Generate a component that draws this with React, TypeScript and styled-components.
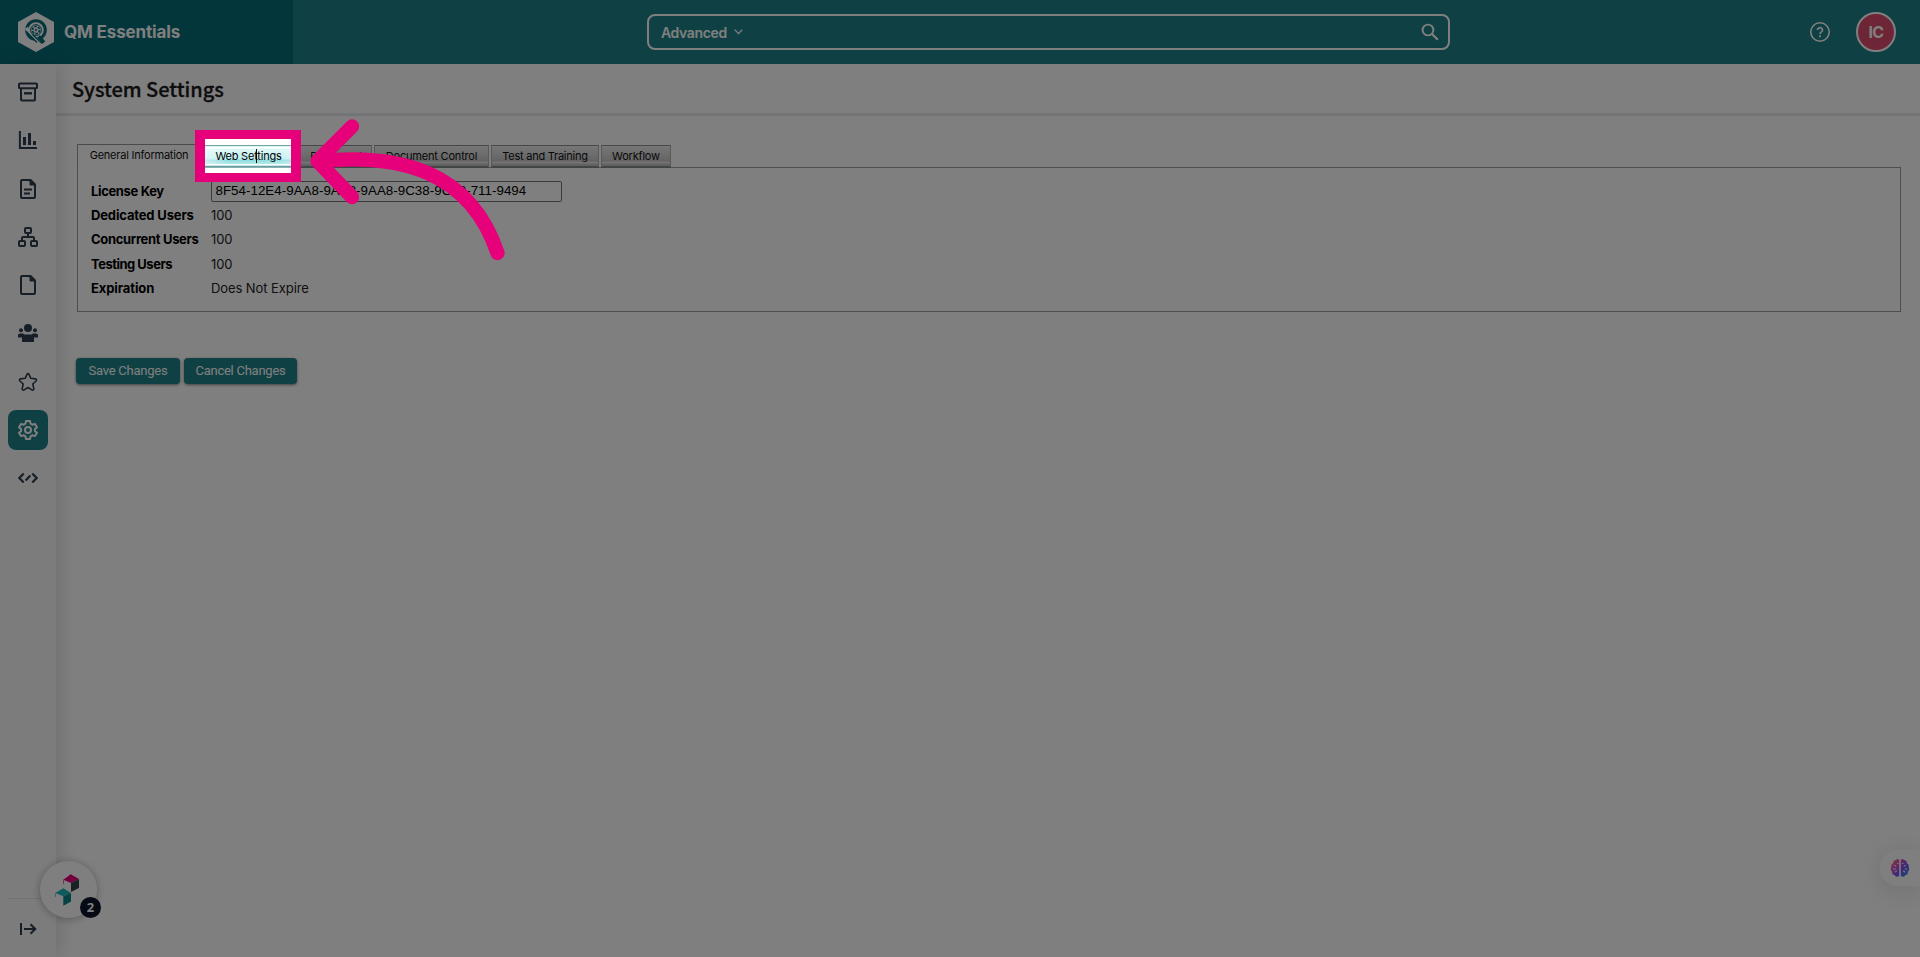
import React from "react";
import styled, { createGlobalStyle, css } from "styled-components";

const Global = createGlobalStyle`
  * { box-sizing: border-box; }
  html, body { margin: 0; height: 100%; overflow: hidden; }
  body { font-family: Inter, "Liberation Sans", sans-serif; background: #fff; color: #111; }
`;

const Page = styled.div`
  position: relative;
  display: flex;
  flex-direction: column;
  width: 100%;
  height: 957px;
  overflow: hidden;
`;

const Header = styled.header`
  display: flex;
  height: 64px;
  flex: none;
  background: #1e8289;
  color: #fff;
`;

const Brand = styled.div`
  display: flex;
  align-items: center;
  width: 293px;
  flex: none;
  padding-left: 18px;
  background: #066c77;
`;

const BrandName = styled.span`
  margin-left: 10px;
  font-size: 17px;
  font-weight: 700;
  letter-spacing: -0.15px;
`;

const SearchBox = styled.div`
  display: flex;
  align-items: center;
  width: 803px;
  height: 36px;
  margin: 14px 0 0 354px;
  padding: 0 9px 0 12px;
  border: 2px solid #fff;
  border-radius: 8px;
`;

const SearchMode = styled.span`
  font-size: 14px;
  font-weight: 600;
  letter-spacing: -0.36px;
`;

const Chevron = styled.svg`
  margin-left: 7px;
`;

const SearchIcon = styled.svg`
  margin-left: auto;
`;

const HeaderActions = styled.div`
  display: flex;
  align-items: center;
  margin-left: auto;
  gap: 26px;
  padding-right: 24px;
`;

const Avatar = styled.div`
  display: flex;
  align-items: center;
  justify-content: center;
  width: 40px;
  height: 40px;
  border: 2px solid #fff;
  border-radius: 50%;
  background: #dd4a6c;
  font-size: 16px;
  font-weight: 700;
  letter-spacing: -0.6px;
`;

const Body = styled.div`
  display: flex;
  flex: 1;
  min-height: 0;
`;

const Sidebar = styled.nav`
  position: relative;
  display: flex;
  flex-direction: column;
  align-items: center;
  width: 56px;
  flex: none;
  padding-top: 8px;
  gap: 8.25px;
  background: #f8f9f9;
  box-shadow: 4px 0 18px rgba(0, 0, 0, 0.13);
`;

const NavItem = styled.div<{ $active?: boolean }>`
  display: flex;
  align-items: center;
  justify-content: center;
  width: 40px;
  height: 40px;
  flex: none;
  border-radius: 8px;
  color: ${(p) => (p.$active ? "#fff" : "#2c3d4f")};
  background: ${(p) => (p.$active ? "#1e8289" : "transparent")};
`;

const SidebarFoot = styled.div`
  display: flex;
  justify-content: center;
  width: 40px;
  height: 59px;
  margin-top: auto;
  padding-top: 23px;
  border-top: 1px solid #dfe2e5;
  color: #2c3d4f;
`;

const Main = styled.main`
  flex: 1;
  min-width: 0;
`;

const TitleBar = styled.div`
  height: 52px;
  padding: 6px 0 0 16px;
  border-bottom: 3px solid #e5e9ed;
`;

const Title = styled.h1`
  margin: 0;
  font: 500 20px/38px "Noto Sans CJK SC", "Noto Sans", sans-serif;
  -webkit-text-stroke: 0.3px #1b1b1b;
  letter-spacing: -0.05px;
  color: #1b1b1b;
`;

const Content = styled.div`
  padding: 28px 19px 0 21px;
`;

const TabRow = styled.div`
  display: flex;
  align-items: flex-end;
  height: 24px;
  margin-bottom: -1px;
  position: relative;
`;

const Tab = styled.div<{ $w: number; $kind: "open" | "lit" | "plain"; $ls?: number }>`
  display: flex;
  align-items: center;
  justify-content: center;
  width: ${(p) => p.$w}px;
  height: 23px;
  font-size: 11px;
  letter-spacing: ${(p) => p.$ls ?? -0.2}px;
  white-space: nowrap;
  color: #111;
  ${(p) =>
    p.$kind === "open" &&
    css`
      height: 24px;
      padding: 0 0 3px 2px;
      border: 1px solid #969696;
      border-bottom: 0;
      background: #fff;
    `}
  ${(p) =>
    p.$kind === "lit" &&
    css`
      padding-bottom: 1px;
      color: #000;
      background:
        linear-gradient(90deg, rgba(255, 255, 255, 0.6), transparent 30% 75%, rgba(255, 255, 255, 0.35)) 0 3px / 100% 16px no-repeat,
        linear-gradient(#72a5a8 0 1px, #d8f3f3 1px 2px, #fff 2px 3px, #def7f7 4px, #bdeff0 14px, #8fdcde 15px, #b0e9ea 19px, #fff 19px 20px, #c8e6e7 20px 21px, #6d9da1 21px 22px, #84b3b6 22px);
    `}
  ${(p) =>
    p.$kind === "plain" &&
    css`
      margin-left: 2px;
      border: 1px solid #b2b2b2;
      border-top-color: #8e8e8e;
      border-bottom: 2px solid #858b8b;
      background: linear-gradient(#ededed, #dedede 35%, #c6c6c6 75%, #e6e6e6 80% 86%, #c4c4c4 90%);
    `}
`;

const Panel = styled.section`
  height: 145px;
  padding: 11px 0 0 13px;
  border: 1px solid #9b9e9e;
`;

const Field = styled.div`
  display: grid;
  grid-template-columns: 120px auto;
  align-items: center;
  height: 24.2px;
  font-size: 13px;
`;

const Label = styled.span<{ $ls: number }>`
  font-weight: 700;
  letter-spacing: ${(p) => p.$ls}px;
  color: #000;
`;

const Value = styled.span`
  color: #222;
  letter-spacing: -0.08px;
`;

const KeyBox = styled.div`
  width: 351px;
  height: 21px;
  padding-left: 3.500px;
  border: 1px solid #767676;
  border-radius: 2px;
  font: 13.333px/18px "Liberation Sans", Arial, sans-serif;
  letter-spacing: 0.03px;
  color: #000;
`;

const Actions = styled.div`
  display: flex;
  gap: 4px;
  margin: 46px 0 0 -1px;
`;

const Button = styled.button<{ $w: number }>`
  width: ${(p) => p.$w}px;
  height: 26px;
  padding: 0;
  border: 0;
  border-radius: 4px;
  background: #1e8289;
  color: #fff;
  font: 13px/26px Roboto, "Liberation Sans", sans-serif;
  letter-spacing: -0.25px;
  box-shadow: 0 1px 3px rgba(0, 0, 0, 0.5);
`;

const CubeWidget = styled.div`
  position: absolute;
  left: 40px;
  top: 861px;
  display: flex;
  align-items: center;
  justify-content: center;
  width: 57px;
  height: 57px;
  padding-right: 2px;
  border-radius: 50%;
  background: #fff;
  box-shadow: 0 1px 8px rgba(0, 0, 0, 0.3);
`;

const CountBadge = styled.span`
  position: absolute;
  left: 40px;
  top: 36px;
  width: 21px;
  height: 21px;
  border-radius: 50%;
  background: #0d1428;
  color: #fff;
  font: 700 13px/21px "Noto Sans", sans-serif;
  text-align: center;
`;

const BrainWidget = styled.div`
  position: absolute;
  right: 0;
  top: 850px;
  display: flex;
  align-items: center;
  width: 40px;
  height: 36px;
  padding-left: 10px;
  border-radius: 18px 0 0 18px;
  background: #fff;
  box-shadow: 0 4px 28px rgba(0, 0, 0, 0.13);
`;

const Spotlight = styled.div`
  position: absolute;
  left: 205px;
  top: 139px;
  width: 86px;
  height: 34px;
  box-shadow: 0 0 0 2400px rgba(0, 0, 0, 0.5);
`;

const Frame = styled.div`
  position: absolute;
  left: 195px;
  top: 130px;
  width: 105.5px;
  height: 52px;
  border: 10px solid #e6007a;
  border-width: 9px 10px;
`;

const Caret = styled.div`
  position: absolute;
  left: 256px;
  top: 149px;
  width: 1px;
  height: 14px;
  background: #000;
`;

const Arrow = styled.svg`
  position: absolute;
  left: 300px;
  top: 110px;
`;

const Logo = () => (
  <svg width="36" height="40" viewBox="0 0 36 40">
    <path d="M18 0 36 10V30L18 40 0 30V10Z" fill="#fff" />
    <g fill="none" stroke="#066c77">
      <circle cx="18" cy="18" r="9.3" strokeWidth="3" />
      <path d="M8 16 22 31" stroke="#fff" strokeWidth="3.4" />
      <path d="M8.3 19.5 19 30.5M14.5 22.5l9.5 9" strokeWidth="1.3" />
      <path d="M20.5 24.5 26 30.5" strokeWidth="3.4" />
      <circle cx="18" cy="18" r="5.4" strokeWidth="1" />
      <circle cx="18" cy="18" r="3.6" strokeWidth="1.8" strokeDasharray="2.6 1.1" />
      <circle cx="18" cy="18" r="0.9" strokeWidth="1" />
    </g>
  </svg>
);

const Icon = ({ children }: { children: React.ReactNode }) => (
  <svg width="20" height="20" viewBox="0 0 20 20" fill="none" stroke="currentColor" strokeWidth="2" strokeLinejoin="round">
    {children}
  </svg>
);

const navIcons: React.ReactNode[] = [
  <>
    <rect x="1" y="1.5" width="18" height="4.7" rx="0.8" />
    <path d="M3 6.5v11a.9.9 0 0 0 .9.9h12.2a.9.9 0 0 0 .9-.9v-11" />
    <path d="M6 11.3h8" strokeWidth="2.4" />
  </>,
  <>
    <path d="M1.9 1v17.1H19" strokeLinejoin="miter" />
    <path d="M6.5 7v8M11.5 3v12M16.5 11v4" strokeWidth="3" />
  </>,
  <>
    <path d="M12.5 1H4A1 1 0 0 0 3 2v16a1 1 0 0 0 1 1h12a1 1 0 0 0 1-1V5.5Z" />
    <path d="M12 1v5h5Z" fill="currentColor" strokeWidth="1" />
    <path d="M6 10.5h8M6 14.5h6" />
  </>,
  <>
    <rect x="7" y="1" width="6" height="5" rx="1" />
    <rect x="1" y="14" width="6" height="5" rx="1" />
    <rect x="13" y="14" width="6" height="5" rx="1" />
    <path d="M10 6v4M4 14v-3a1 1 0 0 1 1-1h10a1 1 0 0 1 1 1v3" />
  </>,
  <>
    <path d="M12.5 1H4A1 1 0 0 0 3 2v16a1 1 0 0 0 1 1h12a1 1 0 0 0 1-1V5.5Z" />
    <path d="M12 1v5h5Z" fill="currentColor" strokeWidth="1" />
  </>,
  <g fill="currentColor" stroke="none">
    <circle cx="10" cy="5" r="4" />
    <circle cx="3" cy="7.2" r="2" />
    <circle cx="17" cy="7.2" r="2" />
    <path d="M0 14.5v-2a2 2 0 0 1 2-2h3.2l1 1h7.6l1-1H18a2 2 0 0 1 2 2v2h-4V19H4v-4.5Z" />
  </g>,
  <path
    d="M10 1.6c.5 0 .8.3 1 .7l1.8 4 4.6.6c1.1.2 1.5 1.3.7 2.1l-3.3 3 1 4.6c.2 1.1-.9 1.9-1.9 1.3L10 15.5l-3.9 2.4c-1 .6-2.1-.2-1.900-1.300l1-4.600-3.300-3c-.8-.8-.4-1.900.7-2.100l4.600-.6 1.800-4c.2-.4.5-.7 1-.7Z"
    strokeWidth="1.6"
  />,
  <>
    <path d="M8 1h4l.6 2.7 1.7 1 2.7-.8 2 3.3-2.1 1.9v1.800l2.100 1.900-2 3.300-2.700-.8-1.700 1L12 19H8l-.6-2.700-1.700-1-2.700.8-2-3.300 2.100-1.900V9.100L1 7.200l2-3.300 2.700.8 1.700-1Z" />
    <circle cx="10" cy="10" r="3" />
  </>,
  <path d="M5.7 5.5 1.3 10l4.4 4.5M14.3 5.5l4.4 4.5-4.4 4.5M12.3 7.6 7.7 12.4" strokeWidth="2.2" strokeLinejoin="miter" />,
];

const fields: [string, number, string][] = [
  ["Dedicated Users", -0.15, "100"],
  ["Concurrent Users", -0.32, "100"],
  ["Testing Users", -0.5, "100"],
  ["Expiration", -0.1, "Does Not Expire"],
];

export default function App() {
  return (
    <Page>
      <Global />
      <Header>
        <Brand>
          <Logo />
          <BrandName>QM Essentials</BrandName>
        </Brand>
        <SearchBox>
          <SearchMode>Advanced</SearchMode>
          <Chevron width="9" height="6" viewBox="0 0 9 6" fill="none" stroke="#fff" strokeWidth="1.3">
            <path d="M.8.8 4.5 4.6 8.2.8" />
          </Chevron>
          <SearchIcon width="18" height="18" viewBox="0 0 18 18" fill="none" stroke="#fff" strokeWidth="1.9">
            <circle cx="7" cy="7" r="5.4" />
            <path d="m10.8 10.8 6 6" strokeWidth="2.2" />
          </SearchIcon>
        </SearchBox>
        <HeaderActions>
          <svg width="20" height="20" viewBox="0 0 20 20" fill="none" stroke="#fff" strokeWidth="1.6">
            <circle cx="10" cy="10" r="9.2" />
            <path d="M7.5 8a2.5 2.3 0 1 1 3.9 1.9c-.9.6-1.4 1-1.4 2.1M10 13.3v1.9" strokeWidth="1.7" />
          </svg>
          <Avatar>IC</Avatar>
        </HeaderActions>
      </Header>
      <Body>
        <Sidebar>
          {navIcons.map((icon, i) => (
            <NavItem key={i} $active={i === 7}>
              <Icon>{icon}</Icon>
            </NavItem>
          ))}
          <SidebarFoot>
            <svg width="17" height="14" viewBox="0 0 17 14" fill="none" stroke="currentColor" strokeWidth="2">
              <path d="M1 1v12M4 7h11M10.5 2.2 15.3 7l-4.8 4.8" />
            </svg>
          </SidebarFoot>
        </Sidebar>
        <Main>
          <TitleBar>
            <Title>System Settings</Title>
          </TitleBar>
          <Content>
            <TabRow>
              <Tab $w={122} $kind="open" $ls={-0.22}>General Information</Tab>
              <Tab $w={99} $kind="lit">Web Settings</Tab>
              <Tab $w={72} $kind="plain" $ls={0.1}>Password</Tab>
              <Tab $w={115} $kind="plain">Document Control</Tab>
              <Tab $w={108} $kind="plain" $ls={-0.25}>Test and Training</Tab>
              <Tab $w={70} $kind="plain">Workflow</Tab>
            </TabRow>
            <Panel>
              <Field>
                <Label $ls={-0.35}>License Key</Label>
                <KeyBox>8F54-12E4-9AA8-9AA8-9AA8-9C38-9C38-711-9494</KeyBox>
              </Field>
              {fields.map(([name, ls, value]) => (
                <Field key={name}>
                  <Label $ls={ls}>{name}</Label>
                  <Value>{value}</Value>
                </Field>
              ))}
            </Panel>
            <Actions>
              <Button $w={104}>Save Changes</Button>
              <Button $w={113}>Cancel Changes</Button>
            </Actions>
          </Content>
        </Main>
      </Body>
      <CubeWidget>
        <svg width="25" height="32" viewBox="0 0 25 32">
          <path d="M8.3 5.7 15.7.3 24 5 16 9Z" fill="#e6007a" />
          <path d="M24 5v9l-8 4V9Z" fill="#35424a" />
          <path d="M8.5 5.7V10" stroke="#e6007a" strokeWidth=".6" />
          <path d="M.3 19 8.3 14.3 16 19l-7.7 3.3Z" fill="#1fb5b8" />
          <path d="M8.3 22.3 16 19v8.5l-7.7 4.2Z" fill="#0c8489" />
          <path d="M.5 19v4" stroke="#1fb5b8" strokeWidth=".6" />
        </svg>
        <CountBadge>2</CountBadge>
      </CubeWidget>
      <BrainWidget>
        <svg width="20" height="20" viewBox="0 0 20 20">
          <defs>
            <linearGradient id="brain" x1="0" y1="0" x2="1" y2="1">
              <stop offset="0" stopColor="#ff8a2a" />
              <stop offset=".3" stopColor="#e04fc0" />
              <stop offset=".6" stopColor="#7a52f0" />
              <stop offset="1" stopColor="#1f9bf0" />
            </linearGradient>
          </defs>
          <path
            d="M9.2 2v16c-1.700 1.500-4.200.8-4.500-1-2 .1-3-1.700-2.500-3.200C.6 12.800.3 10.800 1.300 9.600.8 7.800 1.700 6 3 5.600 3 3.200 4.600 2 6 2.100 6.800.6 8.700.7 9.200 2ZM10.800 2v16c1.700 1.500 4.200.8 4.500-1 2 .1 3-1.700 2.500-3.200 1.600-1 1.900-3 .9-4.200.5-1.800-.4-3.600-1.700-4C17 3.200 15.400 2 14 2.100 13.200.6 11.300.7 10.800 2Z"
            fill="url(#brain)"
          />
          <path d="M4 7.500c1-.2 1.700.3 1.900 1.200M2.800 11h3.400M5 14.500c.2-1 1-1.500 2-1.300M16 7.500c-1-.2-1.700.3-1.900 1.200M17.200 11h-2.400M15 14.500c-.2-1-1-1.500-2-1.300M7 5.500h1.500M12 5.500h1.500" fill="none" stroke="#fff" strokeWidth="1.100" opacity=".9" />
        </svg>
      </BrainWidget>
      <Spotlight />
      <Caret />
      <Frame />
      <Arrow width="220" height="160" viewBox="300 110 220 160" fill="none" stroke="#e6007a" strokeWidth="14.3" strokeLinecap="round" strokeLinejoin="round">
        <path d="M352 126.500 317.500 161 352 197" />
        <path d="M319 161C400 153 470 171 497.500 253" />
      </Arrow>
    </Page>
  );
}
